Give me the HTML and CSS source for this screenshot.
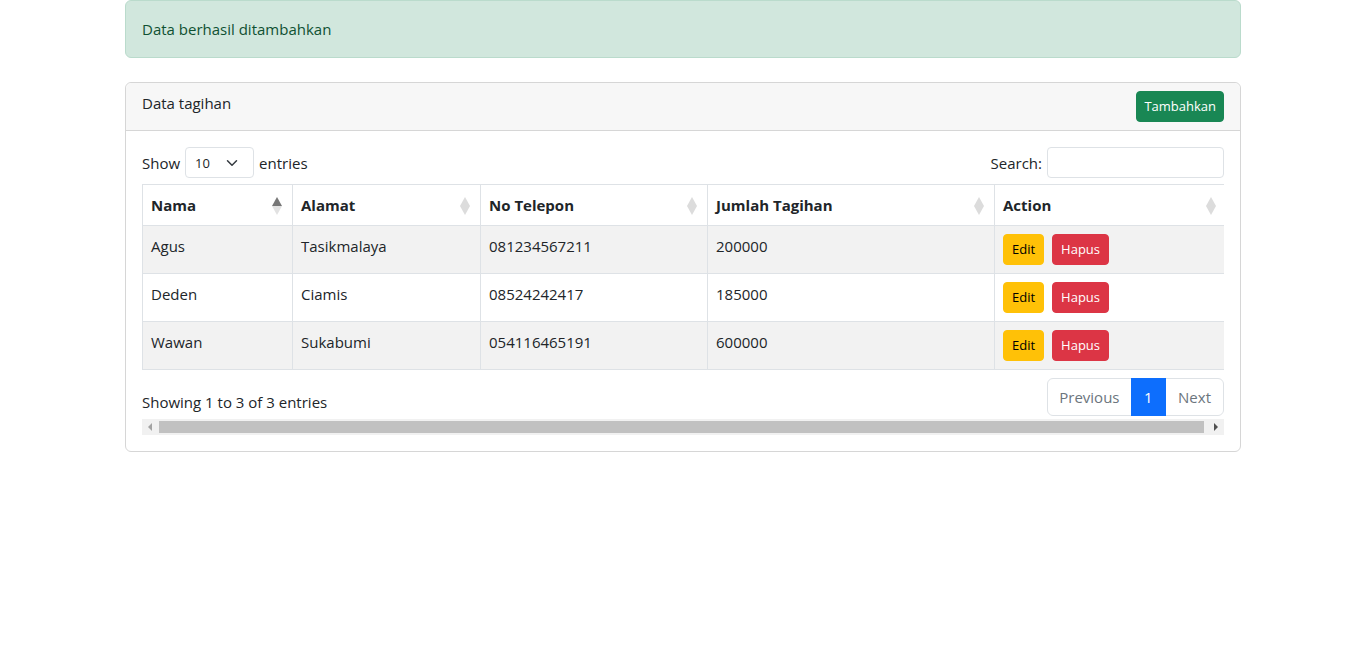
FILE: index.html
```html
<!DOCTYPE html>
<html lang="id">
<head>
<meta charset="utf-8">
<title>Data tagihan</title>
<link rel="stylesheet" href="styles.css">
</head>
<body>
<div class="container">
  <div class="alert">Data berhasil ditambahkan</div>
  <div class="card">
    <div class="card-header">
      <span class="card-title">Data tagihan</span>
      <button class="btn btn-sm btn-success">Tambahkan</button>
    </div>
    <div class="card-body">
      <div class="dt-top">
        <label class="dt-length">Show
          <span class="select">10
            <svg class="chev" width="12" height="12" viewBox="0 0 16 16"><path d="M2 5l6 6 6-6" fill="none" stroke="#343a40" stroke-width="2" stroke-linecap="round" stroke-linejoin="round"/></svg>
          </span>
          entries</label>
        <label class="dt-search">Search: <span class="input"></span></label>
      </div>
      <div class="dt-scroll">
        <table class="table">
          <thead>
            <tr>
              <th class="c1 sort asc">Nama</th>
              <th class="c2 sort">Alamat</th>
              <th class="c3 sort">No Telepon</th>
              <th class="c4 sort">Jumlah Tagihan</th>
              <th class="c5 sort">Action</th>
            </tr>
          </thead>
          <tbody>
            <tr class="odd">
              <td>Agus</td><td>Tasikmalaya</td><td>081234567211</td><td>200000</td>
              <td><div class="actions"><button class="btn btn-sm btn-warning">Edit</button><button class="btn btn-sm btn-danger">Hapus</button></div></td>
            </tr>
            <tr>
              <td>Deden</td><td>Ciamis</td><td>08524242417</td><td>185000</td>
              <td><div class="actions"><button class="btn btn-sm btn-warning">Edit</button><button class="btn btn-sm btn-danger">Hapus</button></div></td>
            </tr>
            <tr class="odd">
              <td>Wawan</td><td>Sukabumi</td><td>054116465191</td><td>600000</td>
              <td><div class="actions"><button class="btn btn-sm btn-warning">Edit</button><button class="btn btn-sm btn-danger">Hapus</button></div></td>
            </tr>
          </tbody>
        </table>
        <div class="dt-bottom">
          <div class="dt-info">Showing 1 to 3 of 3 entries</div>
          <ul class="pagination">
            <li class="page disabled first">Previous</li>
            <li class="page active">1</li>
            <li class="page disabled last">Next</li>
          </ul>
        </div>
      </div>
      <div class="hscroll">
        <span class="arrow left"></span>
        <span class="thumb"></span>
        <span class="arrow right"></span>
      </div>
    </div>
  </div>
</div>
</body>
</html>
```

FILE: styles.css
```css
* { box-sizing: border-box; }
body {
  margin: 0;
  font-family: "Open Sans", "Noto Sans", sans-serif;
  font-size: 16px;
  line-height: 24px;
  color: #212529;
  background: #fff;
}
.container {
  width: 1116px;
  margin: 0 auto;
}
.alert {
  background: #d1e7dd;
  border: 1px solid #badbcc;
  color: #0f5132;
  border-radius: 6px;
  padding: 16px;
  font-size: 15px;
}
.card {
  margin-top: 24px;
  border: 1px solid #d6d6d6;
  border-radius: 6px;
}
.card-header {
  background: #f7f7f7;
  border-bottom: 1px solid #d6d6d6;
  border-radius: 6px 6px 0 0;
  padding: 8px 16px;
  display: flex;
  justify-content: space-between;
  align-items: flex-start;
}
.card-title { font-size: 15px; }
.btn {
  border: 1px solid transparent;
  font-family: inherit;
  cursor: pointer;
}
.btn-sm {
  padding: 4px 8px;
  font-size: 13px;
  line-height: 21px;
  border-radius: 4px;
}
.btn-success { background: #198754; border-color: #198754; color: #fff; padding: 4px 7px; }
.btn-warning { background: #ffc107; border-color: #ffc107; color: #000; }
.btn-danger { background: #dc3545; border-color: #dc3545; color: #fff; }
.card-body { padding: 16px; }
.dt-top {
  display: flex;
  justify-content: space-between;
  align-items: center;
  font-size: 15px;
  line-height: 22px;
}
.dt-length, .dt-search {
  display: flex;
  align-items: center;
  gap: 5px;
}
.select {
  display: inline-flex;
  align-items: center;
  justify-content: space-between;
  width: 69px;
  height: 31px;
  padding: 0 15px 0 9px;
  border: 1px solid #dee2e6;
  border-radius: 4px;
  font-size: 13px;
}
.input {
  display: inline-block;
  width: 177px;
  height: 31px;
  border: 1px solid #dee2e6;
  border-radius: 4px;
}
.dt-scroll {
  overflow: hidden;
  width: 1082px;
}
.table {
  width: 1084px;
  margin-top: 6px;
  border-collapse: collapse;
  table-layout: fixed;
  font-size: 15px;
}
.table th, .table td {
  border: 1px solid #dee2e6;
  padding: 8px;
  text-align: left;
  vertical-align: top;
  line-height: 24px;
}
.table th { font-weight: 700; position: relative; }
.c1 { width: 150px; }
.c2 { width: 188px; }
.c3 { width: 227px; }
.c4 { width: 287px; }
.c5 { width: 232px; }
.table tr.odd td { background: #f2f2f2; }
.sort::before, .sort::after {
  content: "";
  position: absolute;
  right: 10px;
  width: 0;
  height: 0;
  border-left: 5px solid transparent;
  border-right: 5px solid transparent;
}
.sort::before {
  top: 12px;
  border-bottom: 9px solid #dcdcdc;
}
.sort::after {
  top: 21px;
  border-top: 9px solid #dcdcdc;
}
.sort.asc::before { border-bottom-color: #777; }
.sort.asc::after { border-top-color: #e2e2e2; }
.actions { display: flex; gap: 8px; }
.dt-bottom {
  display: flex;
  justify-content: space-between;
  margin-top: 8px;
  font-size: 15px;
}
.dt-info { padding-top: 12px; }
.pagination {
  list-style: none;
  margin: 0;
  padding: 0;
  display: flex;
}
.page {
  padding: 6px 12px;
  border: 1px solid #dee2e6;
  margin-left: -1px;
  line-height: 24px;
  color: #6c757d;
}
.page.first { border-radius: 6px 0 0 6px; padding: 6px 11px; }
.page.last { border-radius: 0 6px 6px 0; }
.page.active {
  background: #0d6efd;
  border-color: #0d6efd;
  color: #fff;
  position: relative;
  padding: 6px 12.5px;
}
.hscroll {
  margin-top: 3px;
  height: 16px;
  width: 1082px;
  background: #f1f1f1;
  display: flex;
  align-items: center;
  padding: 0 6px;
}
.thumb {
  height: 12px;
  width: 1045px;
  background: #c1c1c1;
  margin: 0 auto 0 7px;
}
.arrow {
  width: 0;
  height: 0;
  border-top: 4px solid transparent;
  border-bottom: 4px solid transparent;
}
.arrow.left { border-right: 4px solid #a3a3a3; }
.arrow.right { border-left: 4px solid #505050; }
```
